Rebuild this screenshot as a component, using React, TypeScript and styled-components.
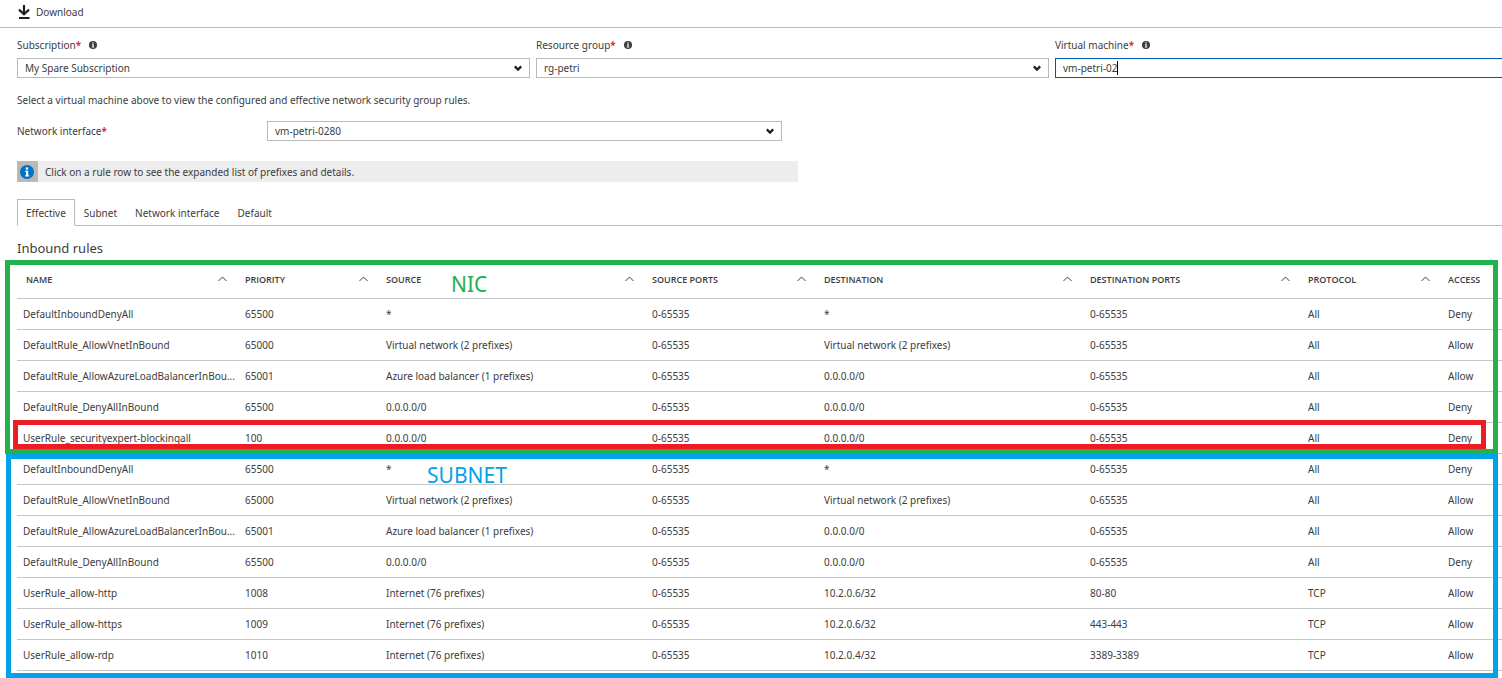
import React from "react";
import styled, { createGlobalStyle } from "styled-components";

const GlobalStyle = createGlobalStyle`
  *, *::before, *::after { box-sizing: border-box; }
  html, body { margin: 0; padding: 0; background: #fff; }
  body, button, input, select {
    font-family: "Noto Sans", "Open Sans", sans-serif;
    font-size: 10px;
    line-height: 16px;
    color: #3c3c3c;
  }
`;

const Page = styled.div`
  overflow: hidden;
`;

const Toolbar = styled.header`
  display: flex;
  height: 28px;
  padding: 0 17px 3px;
  align-items: center;
  border-bottom: 1px solid #b9b9b9;
`;

const ToolbarButton = styled.button`
  display: flex;
  align-items: center;
  gap: 5px;
  height: 24px;
  padding: 0;
  border: 0;
  background: none;
`;

const Form = styled.form`
  padding: 9px 0 0 17px;
`;

const FieldGrid = styled.div`
  display: grid;
  grid-template-columns: repeat(3, 1fr);
  gap: 6px;
  margin-right: -66px;
`;

const Field = styled.div`
  display: flex;
  flex-direction: column;
  gap: 5px;
`;

const LabelRow = styled.div`
  display: flex;
  align-items: center;
  gap: 8px;
`;

const Label = styled.label`
  display: block;
`;

const Required = styled.span`
  font-weight: 600;
  color: #e81123;
`;

const SelectBox = styled.div`
  position: relative;
  display: flex;
  height: 20px;
`;

const Select = styled.select`
  appearance: none;
  width: 100%;
  height: 20px;
  padding: 0 24px 0 7px;
  border: 1px solid #b9b9b9;
  border-radius: 0;
  background: #fff;
`;

const SelectArrow = styled.svg`
  position: absolute;
  right: 8px;
  top: 7px;
  pointer-events: none;
`;

const TextBox = styled.div`
  display: flex;
  align-items: center;
  height: 20px;
  padding-left: 7px;
  border: 1px solid #0058ad;
`;

const TextInput = styled.input`
  field-sizing: content;
  height: 18px;
  padding: 0;
  border: 0;
  outline: 0;
  background: none;
`;

const Caret = styled.span`
  width: 1px;
  height: 14px;
  background: #000;
`;

const Hint = styled.p`
  margin: 14px 0 0;
`;

const InterfaceRow = styled.div`
  display: grid;
  grid-template-columns: 250px minmax(0, 515px);
  margin-top: 13px;
`;

const InfoBar = styled.div`
  display: flex;
  align-items: center;
  gap: 7px;
  width: 52vw;
  height: 21px;
  margin-top: 20px;
  background: #ededed;
`;

const InfoIconBox = styled.span`
  display: flex;
  align-items: center;
  padding-left: 3px;
  width: 21px;
  height: 21px;
  background: #b9b9b9;
`;

const Tabs = styled.nav`
  display: flex;
  height: 27px;
  margin-top: 17px;
  padding-left: 17px;
  background: linear-gradient(#b9b9b9, #b9b9b9) 17px 100% / 100% 1px no-repeat;
`;

const Tab = styled.button<{ $active?: boolean }>`
  padding: 0 8px;
  border: 1px solid transparent;
  border-color: ${(p) => (p.$active ? "#b9b9b9 #b9b9b9 #fff" : "transparent")};
  background: ${(p) => (p.$active ? "#fff" : "none")};
`;

const Heading = styled.h2`
  margin: 12px 0 5px 17px;
  font-size: 13px;
  line-height: 20px;
  font-weight: 400;
`;

const TableArea = styled.div`
  position: relative;
  padding: 0 0 7px 17px;
`;

const TableClip = styled.div`
  margin-right: -66px;
`;

const Table = styled.table`
  width: 100%;
  table-layout: fixed;
  border-collapse: separate;
  border-spacing: 0;
`;

const Col = styled.col<{ $w?: number }>`
  width: ${(p) => (p.$w ? `${p.$w}px` : "auto")};
`;

const Th = styled.th`
  height: 36px;
  padding: 0 9px 2px 9px;
  border-bottom: 1px solid #c6c6c6;
  font-family: "Open Sans", "Noto Sans", sans-serif;
  font-size: 9px;
  font-weight: 600;
  text-align: left;
`;

const ThInner = styled.div`
  display: flex;
  align-items: center;
  justify-content: space-between;
`;

const Td = styled.td<{ $first?: boolean }>`
  height: 31px;
  padding: 0 0 0 ${(p) => (p.$first ? 6 : 9)}px;
  border-bottom: 1px solid #c6c6c6;
  overflow: hidden;
  text-overflow: ellipsis;
  white-space: nowrap;
`;

const Outline = styled.div<{ $color: string; $top: number; $height: number; $left: number; $right: number }>`
  position: absolute;
  top: ${(p) => p.$top}px;
  left: ${(p) => p.$left}px;
  right: ${(p) => p.$right}px;
  height: ${(p) => p.$height}px;
  border: 5px solid ${(p) => p.$color};
  pointer-events: none;
`;

const Note = styled.span<{ $color: string; $top: number; $left: number }>`
  position: absolute;
  top: ${(p) => p.$top}px;
  left: ${(p) => p.$left}px;
  font-size: 21px;
  line-height: 24px;
  color: ${(p) => p.$color};
`;

const GREEN = "#22b14c";
const RED = "#ed1c24";
const BLUE = "#00a2e8";

const columns = [
  { title: "NAME", width: 219 },
  { title: "PRIORITY", width: 141 },
  { title: "SOURCE", width: 266 },
  { title: "SOURCE PORTS", width: 172 },
  { title: "DESTINATION", width: 266 },
  { title: "DESTINATION PORTS", width: 218 },
  { title: "PROTOCOL", width: 140 },
  { title: "ACCESS" },
];

const anyPort = "0-65535";
const rules = [
  ["DefaultInboundDenyAll", "65500", "*", anyPort, "*", anyPort, "All", "Deny"],
  ["DefaultRule_AllowVnetInBound", "65000", "Virtual network (2 prefixes)", anyPort, "Virtual network (2 prefixes)", anyPort, "All", "Allow"],
  ["DefaultRule_AllowAzureLoadBalancerInBou...", "65001", "Azure load balancer (1 prefixes)", anyPort, "0.0.0.0/0", anyPort, "All", "Allow"],
  ["DefaultRule_DenyAllInBound", "65500", "0.0.0.0/0", anyPort, "0.0.0.0/0", anyPort, "All", "Deny"],
  ["UserRule_securityexpert-blockingall", "100", "0.0.0.0/0", anyPort, "0.0.0.0/0", anyPort, "All", "Deny"],
  ["DefaultInboundDenyAll", "65500", "*", anyPort, "*", anyPort, "All", "Deny"],
  ["DefaultRule_AllowVnetInBound", "65000", "Virtual network (2 prefixes)", anyPort, "Virtual network (2 prefixes)", anyPort, "All", "Allow"],
  ["DefaultRule_AllowAzureLoadBalancerInBou...", "65001", "Azure load balancer (1 prefixes)", anyPort, "0.0.0.0/0", anyPort, "All", "Allow"],
  ["DefaultRule_DenyAllInBound", "65500", "0.0.0.0/0", anyPort, "0.0.0.0/0", anyPort, "All", "Deny"],
  ["UserRule_allow-http", "1008", "Internet (76 prefixes)", anyPort, "10.2.0.6/32", "80-80", "TCP", "Allow"],
  ["UserRule_allow-https", "1009", "Internet (76 prefixes)", anyPort, "10.2.0.6/32", "443-443", "TCP", "Allow"],
  ["UserRule_allow-rdp", "1010", "Internet (76 prefixes)", anyPort, "10.2.0.4/32", "3389-3389", "TCP", "Allow"],
];

const DownloadIcon = () => (
  <svg width="14" height="16" viewBox="0 0 14 16" aria-hidden="true">
    <path d="M7 1V9.5M2 5.6L7 10.2L12 5.6" fill="none" stroke="#1e1e1e" strokeWidth="2.2" />
    <path d="M2 14H12.5" stroke="#1e1e1e" strokeWidth="2" />
  </svg>
);

const InfoDot = ({ size = 8, color = "#3c3c3c" }: { size?: number; color?: string }) => (
  <svg width={size} height={size} viewBox="0 0 14 14" aria-hidden="true">
    <circle cx="7" cy="7" r="7" fill={color} />
    <circle cx="7" cy="3.6" r="1.3" fill="#fff" />
    <path d="M5.2 5.8H8.2V10.2H9.2V11.4H5V10.2H6V6.9H5.2Z" fill="#fff" />
  </svg>
);

const SortIcon = () => (
  <svg width="9" height="8" viewBox="0 0 9 8" aria-hidden="true">
    <path d="M0.5 5L4.5 1L8.5 5" fill="none" stroke="#3c3c3c" strokeWidth="1" />
  </svg>
);

const Picker = ({ id, value }: { id: string; value: string }) => (
  <SelectBox>
    <Select id={id} defaultValue={value}>
      <option>{value}</option>
    </Select>
    <SelectArrow width="8" height="7" viewBox="0 0 8 7" aria-hidden="true">
      <path d="M0.8 1.4L4 4.6L7.2 1.4" fill="none" stroke="#1e1e1e" strokeWidth="2.2" />
    </SelectArrow>
  </SelectBox>
);

const FieldLabel = ({ htmlFor, text, info = true }: { htmlFor: string; text: string; info?: boolean }) => (
  <LabelRow>
    <Label htmlFor={htmlFor}>
      {text}
      <Required>*</Required>
    </Label>
    {info && <InfoDot />}
  </LabelRow>
);

export default function App() {
  return (
    <Page>
      <GlobalStyle />
      <Toolbar>
        <ToolbarButton type="button">
          <DownloadIcon />
          Download
        </ToolbarButton>
      </Toolbar>
      <Form>
        <FieldGrid>
          <Field>
            <FieldLabel htmlFor="subscription" text="Subscription" />
            <Picker id="subscription" value="My Spare Subscription" />
          </Field>
          <Field>
            <FieldLabel htmlFor="group" text="Resource group" />
            <Picker id="group" value="rg-petri" />
          </Field>
          <Field>
            <FieldLabel htmlFor="machine" text="Virtual machine" />
            <TextBox>
              <TextInput id="machine" type="text" defaultValue="vm-petri-02" />
              <Caret />
            </TextBox>
          </Field>
        </FieldGrid>
        <Hint>Select a virtual machine above to view the configured and effective network security group rules.</Hint>
        <InterfaceRow>
          <FieldLabel htmlFor="nic" text="Network interface" info={false} />
          <Picker id="nic" value="vm-petri-0280" />
        </InterfaceRow>
        <InfoBar>
          <InfoIconBox>
            <InfoDot size={14} color="#0072c6" />
          </InfoIconBox>
          Click on a rule row to see the expanded list of prefixes and details.
        </InfoBar>
      </Form>
      <Tabs>
        <Tab type="button" $active>Effective</Tab>
        <Tab type="button">Subnet</Tab>
        <Tab type="button">Network interface</Tab>
        <Tab type="button">Default</Tab>
      </Tabs>
      <Heading>Inbound rules</Heading>
      <TableArea>
        <TableClip>
          <Table>
            <colgroup>
              {columns.map((c) => (
                <Col key={c.title} $w={c.width} />
              ))}
            </colgroup>
            <thead>
              <tr>
                {columns.map((c) => (
                  <Th key={c.title} scope="col">
                    <ThInner>
                      {c.title}
                      {c.width && <SortIcon />}
                    </ThInner>
                  </Th>
                ))}
              </tr>
            </thead>
            <tbody>
              {rules.map((rule, r) => (
                <tr key={r}>
                  {rule.map((cell, i) => (
                    <Td key={i} $first={i === 0}>{cell}</Td>
                  ))}
                </tr>
              ))}
            </tbody>
          </Table>
        </TableClip>
        <Outline $color={GREEN} $top={-3} $height={194} $left={5} $right={4} />
        <Outline $color={RED} $top={157} $height={29} $left={13} $right={16} />
        <Outline $color={BLUE} $top={191} $height={224} $left={6} $right={4} />
        <Note $color={GREEN} $top={9} $left={451}>NIC</Note>
        <Note $color={BLUE} $top={200} $left={427}>SUBNET</Note>
      </TableArea>
    </Page>
  );
}
